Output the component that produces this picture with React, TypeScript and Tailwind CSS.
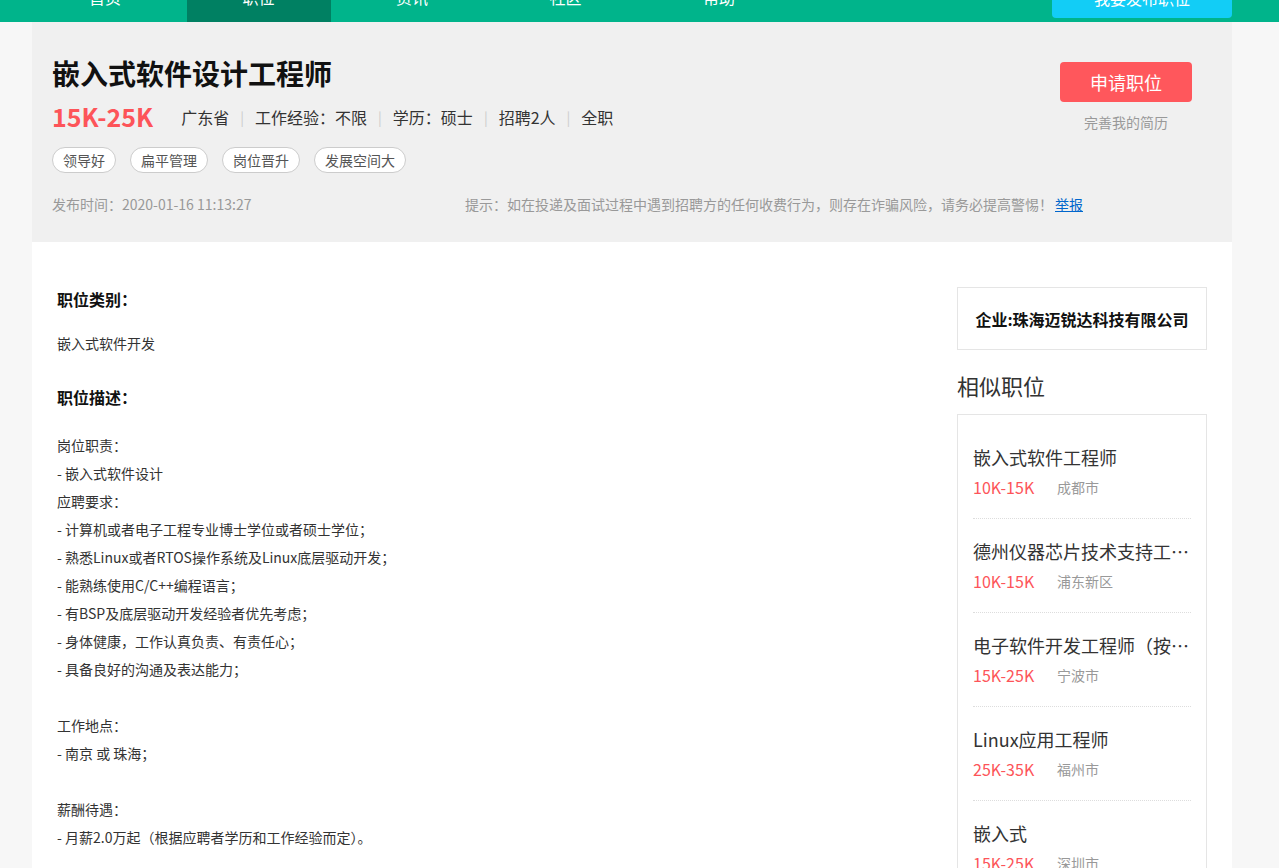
import React from "react";

const navItems = ["首页", "职位", "资讯", "社区", "帮助"];

const infoItems = ["广东省", "工作经验：不限", "学历：硕士", "招聘2人", "全职"];

const tags = ["领导好", "扁平管理", "岗位晋升", "发展空间大"];

const descLines = [
  "岗位职责：",
  "- 嵌入式软件设计",
  "应聘要求：",
  "- 计算机或者电子工程专业博士学位或者硕士学位；",
  "- 熟悉Linux或者RTOS操作系统及Linux底层驱动开发；",
  "- 能熟练使用C/C++编程语言；",
  "- 有BSP及底层驱动开发经验者优先考虑；",
  "- 身体健康，工作认真负责、有责任心；",
  "- 具备良好的沟通及表达能力；",
  "",
  "工作地点：",
  "- 南京 或 珠海；",
  "",
  "薪酬待遇：",
  "- 月薪2.0万起（根据应聘者学历和工作经验而定）。",
];

const similarJobs = [
  { title: "嵌入式软件工程师", salary: "10K-15K", city: "成都市" },
  { title: "德州仪器芯片技术支持工程师", salary: "10K-15K", city: "浦东新区" },
  { title: "电子软件开发工程师（按项目结算）", salary: "15K-25K", city: "宁波市" },
  { title: "Linux应用工程师", salary: "25K-35K", city: "福州市" },
  { title: "嵌入式", salary: "15K-25K", city: "深圳市" },
];

const Nav = () => (
  <div className="bg-[#00b48b] -mt-[28px] h-[50px]">
    <div className="w-[1200px] ml-[32px] flex justify-between">
      <div className="flex gap-[9.5px] pl-px">
        {navItems.map((item, i) => (
          <div
            key={item}
            className={
              i === 1
                ? "w-[144px] h-[50px] leading-[50px] text-center text-white text-[16px] bg-[#008062]"
                : "w-[144px] h-[50px] leading-[50px] text-center text-white text-[16px]"
            }
          >
            {item}
          </div>
        ))}
      </div>
      <button className="mt-[6px] w-[180px] h-[40px] rounded-[4px] bg-[#12cdf6] text-white text-[16px]">
        我要发布职位
      </button>
    </div>
  </div>
);

const JobHeader = () => (
  <div className="bg-[#f0f0f0] h-[220px] pl-[20px] pr-[40px] flex justify-between">
    <div className="pt-[31px] flex-1 min-w-0">
      <h1 className="text-[28px] leading-[40px] font-bold text-[#111]">嵌入式软件设计工程师</h1>
      <div className="mt-[8px] flex items-center h-[32px]">
        <span className="text-[25px] font-bold text-[#fd5459] mr-[28px]">15K-25K</span>
        {infoItems.map((item, i) => (
          <React.Fragment key={item}>
            {i > 0 && <span className="mx-[11px] text-[14px] text-[#ccc]">|</span>}
            <span className="text-[16px] text-[#333]">{item}</span>
          </React.Fragment>
        ))}
      </div>
      <div className="mt-[14px] flex gap-[14px]">
        {tags.map((t) => (
          <span
            key={t}
            className="h-[26px] leading-[24px] px-[10px] rounded-full border border-[#ccc] bg-white text-[14px] text-[#555]"
          >
            {t}
          </span>
        ))}
      </div>
      <div className="mt-[21px] flex text-[14px] leading-[20px] text-[#999] whitespace-nowrap">
        <span className="w-[413px] shrink-0">发布时间：2020-01-16 11:13:27</span>
        <span>
          提示：如在投递及面试过程中遇到招聘方的任何收费行为，则存在诈骗风险，请务必提高警惕！
          <a className="text-[#0066cc] underline ml-[2px]">举报</a>
        </span>
      </div>
    </div>
    <div className="pt-[40px] w-[132px] shrink-0 flex flex-col items-center">
      <button className="w-[132px] h-[40px] rounded-[4px] bg-[#ff575c] text-white text-[18px]">
        申请职位
      </button>
      <div className="mt-[10px] leading-[20px] text-[14px] text-[#999]">完善我的简历</div>
    </div>
  </div>
);

const Description = () => (
  <div className="flex-1">
    <h2 className="text-[16px] leading-[24px] font-bold text-[#111]">职位类别：</h2>
    <p className="mt-[18px] text-[14px] leading-[28px] text-[#333]">嵌入式软件开发</p>
    <h2 className="mt-[28px] text-[16px] leading-[24px] font-bold text-[#111]">职位描述：</h2>
    <div className="mt-[22px] text-[14px] leading-[28px] text-[#333]">
      {descLines.map((line, i) => (
        <div key={i} className="h-[28px]">
          {line}
        </div>
      ))}
    </div>
  </div>
);

const Sidebar = () => (
  <div className="w-[250px] shrink-0">
    <div className="h-[63px] border border-[#e5e5e5] flex items-center justify-center text-[16px] font-bold text-[#111]">
      企业:珠海迈锐达科技有限公司
    </div>
    <div className="mt-[20px] text-[22px] leading-[30px] text-[#333]">相似职位</div>
    <div className="mt-[14px] border border-[#e5e5e5] px-[15px] pt-[10px]">
      {similarJobs.map((job) => (
        <div key={job.title} className="pt-[20px] pb-[19px] border-b border-dotted border-[#ddd]">
          <div className="text-[18px] leading-[24px] text-[#333] truncate">{job.title}</div>
          <div className="mt-[6px] flex items-center leading-[24px]">
            <span className="text-[16px] text-[#fd5459] w-[84px]">{job.salary}</span>
            <span className="text-[14px] text-[#999]">{job.city}</span>
          </div>
        </div>
      ))}
    </div>
  </div>
);

export default function App() {
  return (
    <div className="min-h-screen bg-[#f7f7f7] font-['Microsoft_YaHei','Noto_Sans_CJK_SC',sans-serif]">
      <Nav />
      <div className="w-[1200px] ml-[32px]">
        <JobHeader />
        <div className="bg-white px-[25px] pt-[45px] pb-[40px] flex gap-[40px]">
          <Description />
          <Sidebar />
        </div>
      </div>
    </div>
  );
}
